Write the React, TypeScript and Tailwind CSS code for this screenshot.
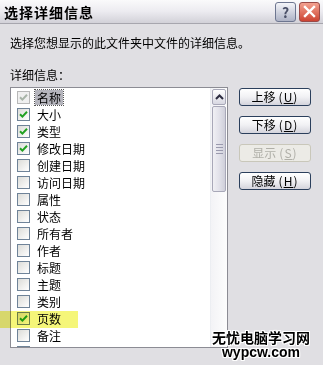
import React from "react";

const rows: { label: string; checked: boolean; disabled?: boolean; selected?: boolean }[] = [
  { label: "名称", checked: true, disabled: true, selected: true },
  { label: "大小", checked: true },
  { label: "类型", checked: true },
  { label: "修改日期", checked: true },
  { label: "创建日期", checked: false },
  { label: "访问日期", checked: false },
  { label: "属性", checked: false },
  { label: "状态", checked: false },
  { label: "所有者", checked: false },
  { label: "作者", checked: false },
  { label: "标题", checked: false },
  { label: "主题", checked: false },
  { label: "类别", checked: false },
  { label: "页数", checked: true },
  { label: "备注", checked: false },
  { label: "版权", checked: false },
];

const font = { fontFamily: '"Noto Sans CJK SC", "Noto Sans", sans-serif' };

function Check({ checked, disabled }: { checked: boolean; disabled?: boolean }) {
  return (
    <div
      className={
        "w-[13px] h-[13px] shrink-0 border flex items-center justify-center " +
        (disabled ? "border-[#b8b8b8] bg-[#f0f0f0]" : "border-[#6f8398] bg-gradient-to-br from-[#dcdcd8] to-[#ffffff]")
      }
    >
      {checked && (
        <svg width="9" height="9" viewBox="0 0 9 9">
          <path
            d="M1 4.2 L3.4 6.6 L8 1.8"
            fill="none"
            stroke={disabled ? "#a8b4a8" : "#21a121"}
            strokeWidth="2"
          />
        </svg>
      )}
    </div>
  );
}

function Btn({ label, k, disabled }: { label: string; k: string; disabled?: boolean }) {
  return (
    <div
      className={
        "w-[72px] h-[18px] rounded-[3px] border flex items-center justify-center text-[12px] leading-none " +
        (disabled
          ? "border-[#c9c7ba] bg-[#ecebe6] text-[#b0afa8]"
          : "border-[#2b3f5c] bg-gradient-to-b from-[#ffffff] via-[#f1f1f4] to-[#d4d4dc] text-black")
      }
      style={font}
    >
      {label}
      <span className="ml-[3px] tracking-[1px]">
        (<span className="underline">{k}</span>)
      </span>
    </div>
  );
}

export default function App() {
  return (
    <div className="w-[323px] h-[365px] bg-[#e0dfe3] overflow-hidden relative" style={font}>
      {/* Title bar */}
      <div className="h-[24px] flex items-center justify-between pl-[4px] pr-[3px] bg-gradient-to-b from-[#fafafb] via-[#ecebf0] to-[#d2d1d8] border-b border-[#a7a6ae]">
        <span className="text-[14px] font-bold text-black leading-none tracking-[1px]">选择详细信息</span>
        <div className="flex gap-[3px]">
          <div className="w-[21px] h-[20px] rounded-[3px] border border-[#6d7690] bg-gradient-to-b from-[#f4f5f9] to-[#aeb3c6] flex items-center justify-center text-[14px] font-bold text-[#4a5068] leading-none">
            ?
          </div>
          <div className="w-[21px] h-[20px] rounded-[3px] border border-[#9a4a48] bg-gradient-to-b from-[#f2a08f] to-[#cc4232] flex items-center justify-center">
            <svg width="13" height="13" viewBox="0 0 13 13">
              <path d="M2 2 L11 11 M11 2 L2 11" stroke="#fff" strokeWidth="2.4" strokeLinecap="square" />
            </svg>
          </div>
        </div>
      </div>

      <div className="px-[10px]">
        <div className="pt-[11px] text-[12px] leading-[16px] text-black">选择您想显示的此文件夹中文件的详细信息。</div>
        <div className="pt-[16px] text-[12px] leading-[16px] text-black">详细信息：</div>

        <div className="flex mt-[4px] items-start">
          {/* List box */}
          <div className="w-[218px] h-[261px] border border-[#8c8c94] bg-white flex overflow-hidden">
            <div className="flex-1 pt-[1px] pl-[6px]">
              {rows.map((r) => (
                <div key={r.label} className="h-[17px] flex items-center">
                  <Check checked={r.checked} disabled={r.disabled} />
                  <span
                    className={
                      "ml-[5px] px-[2px] text-[12px] leading-[15px] text-black " +
                      (r.selected ? "bg-[#b5b5bd] outline outline-1 outline-dotted outline-[#555]" : "")
                    }
                  >
                    {r.label}
                  </span>
                </div>
              ))}
            </div>
            {/* Scrollbar */}
            <div className="w-[17px] h-full bg-gradient-to-r from-[#f3f3f6] to-[#fdfdfd] flex flex-col border-l border-[#eceef2]">
              <div className="h-[16px] mx-[1px] mt-[1px] rounded-[2px] border border-[#a8a8b8] bg-gradient-to-b from-[#ffffff] to-[#d8d8e2] flex items-center justify-center">
                <svg width="9" height="6" viewBox="0 0 9 6">
                  <path d="M1 5 L4.5 1.5 L8 5" fill="none" stroke="#2c2c40" strokeWidth="2" />
                </svg>
              </div>
              <div className="h-[86px] mx-[1px] mt-[1px] rounded-[2px] border border-[#a8a8b8] bg-gradient-to-r from-[#f0f0f4] via-[#e2e2ea] to-[#cfcfda] flex flex-col items-center justify-center gap-[2px]">
                <div className="w-[7px] h-[1px] bg-[#9a9aae]" />
                <div className="w-[7px] h-[1px] bg-[#9a9aae]" />
                <div className="w-[7px] h-[1px] bg-[#9a9aae]" />
                <div className="w-[7px] h-[1px] bg-[#9a9aae]" />
              </div>
            </div>
          </div>

          {/* Buttons */}
          <div className="ml-[11px] mt-[1px] flex flex-col gap-[10px]">
            <Btn label="上移" k="U" />
            <Btn label="下移" k="D" />
            <Btn label="显示" k="S" disabled />
            <Btn label="隐藏" k="H" />
          </div>
        </div>
      </div>

      {/* Yellow marker highlight over 页数 row */}
      <div className="absolute left-0 top-[311px] w-[78px] h-[17px] bg-[#f4f56a] mix-blend-multiply opacity-90 pointer-events-none" />

      {/* Watermark */}
      <div
        className="absolute left-[212px] top-[330px] flex flex-col items-center text-black font-bold"
        style={{ textShadow: "1px 0 #fff, -1px 0 #fff, 0 1px #fff, 0 -1px #fff, 1px 1px #fff, -1px -1px #fff, 1px -1px #fff, -1px 1px #fff" }}
      >
        <span className="text-[14px] leading-[15px]">无忧电脑学习网</span>
        <span className="text-[14px] leading-[14px]" style={{ fontFamily: '"Liberation Sans", sans-serif' }}>wypcw.com</span>
      </div>
    </div>
  );
}
